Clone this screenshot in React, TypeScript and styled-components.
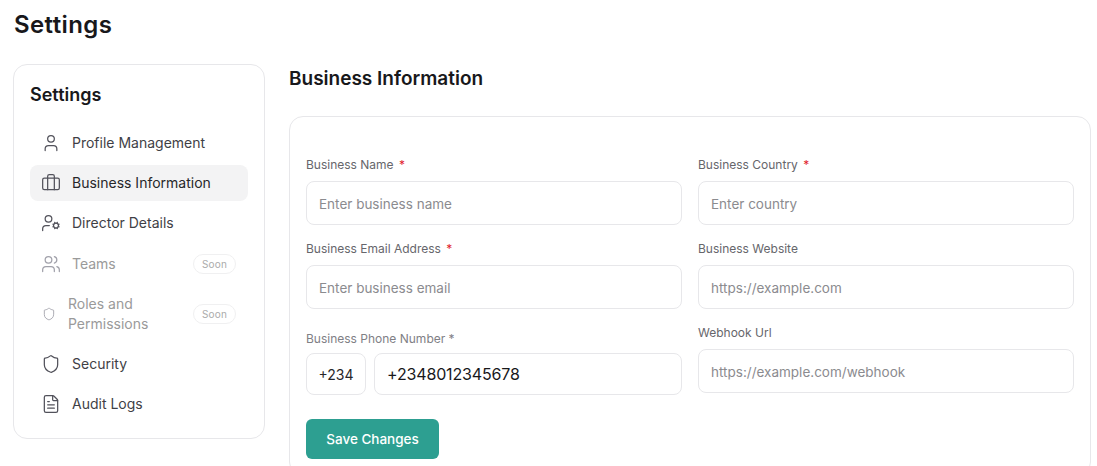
import styled, { createGlobalStyle } from 'styled-components'
import { Briefcase, FileText, Shield, User, UserCog, Users } from 'lucide-react'

const GlobalStyle = createGlobalStyle`
  html, body {
    margin: 0;
    padding: 0;
    height: 466px;
    overflow: hidden;
    background: #fff;
  }
  body {
    font-family: Inter, "Liberation Sans", sans-serif;
    color: #18181b;
  }
  * {
    box-sizing: border-box;
  }
`

const navItems = [
  { label: 'Profile Management', icon: User },
  { label: 'Business Information', icon: Briefcase, active: true },
  { label: 'Director Details', icon: UserCog },
  { label: 'Teams', icon: Users, soon: true },
  { label: 'Roles and Permissions', icon: Shield, soon: true, compact: true },
  { label: 'Security', icon: Shield },
  { label: 'Audit Logs', icon: FileText },
]

export default function App() {
  return (
    <Page>
      <GlobalStyle />
      <PageTitle>Settings</PageTitle>
      <Columns>
        <Sidebar>
          <SidebarTitle>Settings</SidebarTitle>
          <NavList>
            {navItems.map(({ label, icon: Icon, active, soon, compact }) => (
              <NavItem key={label} $active={active} $soon={soon} $compact={compact}>
                <Icon size={compact ? 14 : 20} strokeWidth={1.5} />
                <NavLabel>{label}</NavLabel>
                {soon && <SoonBadge>Soon</SoonBadge>}
              </NavItem>
            ))}
          </NavList>
        </Sidebar>
        <Main>
          <MainTitle>Business Information</MainTitle>
          <Card>
            <FormColumn>
              <Field>
                <Label>
                  Business Name <Required>*</Required>
                </Label>
                <Input placeholder="Enter business name" />
              </Field>
              <Field>
                <Label>
                  Business Email Address <Required>*</Required>
                </Label>
                <Input placeholder="Enter business email" />
              </Field>
              <PhoneField>
                <PhoneLabel>Business Phone Number *</PhoneLabel>
                <PhoneRow>
                  <DialCode>+234</DialCode>
                  <PhoneInput defaultValue="+2348012345678" />
                </PhoneRow>
              </PhoneField>
              <SaveButton>Save Changes</SaveButton>
            </FormColumn>
            <FormColumn>
              <Field>
                <Label>
                  Business Country <Required>*</Required>
                </Label>
                <Input placeholder="Enter country" />
              </Field>
              <Field>
                <Label>Business Website</Label>
                <Input placeholder="https://example.com" />
              </Field>
              <Field>
                <Label>Webhook Url</Label>
                <Input placeholder="https://example.com/webhook" />
              </Field>
            </FormColumn>
          </Card>
        </Main>
      </Columns>
    </Page>
  )
}

const Page = styled.div`
  padding: 10px 6px 0 13px;
`

const PageTitle = styled.h1`
  margin: 0 0 24px 1px;
  font-size: 24px;
  line-height: 30px;
  font-weight: 600;
  letter-spacing: 0.4px;
  color: #18181b;
`

const Columns = styled.div`
  display: flex;
  align-items: flex-start;
  gap: 24px;
`

const Sidebar = styled.aside`
  flex: 0 0 252px;
  padding: 16px;
  border: 1px solid #e7e7ea;
  border-radius: 14px;
`

const SidebarTitle = styled.h2`
  margin: 3px 0 19px;
  font-size: 18px;
  line-height: 22px;
  font-weight: 600;
`

const NavList = styled.nav`
  display: flex;
  flex-direction: column;
  gap: 4px;
`

const NavItem = styled.div<{ $active?: boolean; $soon?: boolean; $compact?: boolean }>`
  display: flex;
  align-items: center;
  gap: ${(p) => (p.$compact ? '12px' : '11px')};
  min-height: ${(p) => (p.$soon ? '37px' : '36px')};
  padding: ${(p) => (p.$soon ? '8px 12px' : '0 12px')};
  padding-left: ${(p) => (p.$compact ? '12px' : '11px')};
  border-radius: 8px;
  font-size: 14px;
  line-height: 20px;
  color: ${(p) => (p.$soon ? '#9a9a9a' : p.$active ? '#27272a' : '#3f3f46')};
  background: ${(p) => (p.$active ? '#f3f3f4' : 'transparent')};

  svg {
    flex-shrink: 0;
    color: ${(p) => (p.$soon ? '#a1a1aa' : '#52525b')};
  }
`

const NavLabel = styled.span`
  flex: 1;
  padding-right: 16px;
`

const SoonBadge = styled.span`
  flex-shrink: 0;
  width: 43px;
  height: 20px;
  border: 1px solid #f0f0f1;
  border-radius: 10px;
  font-size: 10px;
  line-height: 18px;
  text-align: center;
  letter-spacing: 0.2px;
  color: #ababab;
`

const Main = styled.main`
  flex: 1;
  min-width: 0;
`

const MainTitle = styled.h2`
  margin: 0 0 22px;
  font-size: 19px;
  line-height: 30px;
  font-weight: 600;
`

const Card = styled.section`
  display: grid;
  grid-template-columns: 1fr 1fr;
  gap: 16px;
  padding: 40px 16px 16px;
  border: 1px solid #e7e7ea;
  border-radius: 14px;
`

const FormColumn = styled.div`
  display: flex;
  flex-direction: column;
  align-items: stretch;
  gap: 16px;
`

const Field = styled.div`
  display: flex;
  flex-direction: column;
  gap: 8px;
`

const Label = styled.label`
  font-size: 12px;
  line-height: 16px;
  font-weight: 400;
  color: #66666b;
`

const Required = styled.span`
  color: #e11d2e;
  margin-left: 2px;
`

const Input = styled.input`
  height: 44px;
  width: 100%;
  padding: 1px 12px 0;
  border: 1px solid #e7e7ea;
  border-radius: 8px;
  font-family: inherit;
  font-size: 13.5px;
  color: #18181b;
  outline: none;

  &::placeholder {
    color: #8b8b8f;
    opacity: 1;
  }
`

const PhoneField = styled.div`
  display: flex;
  flex-direction: column;
  gap: 6px;
  margin-top: 6px;
`

const PhoneLabel = styled(Label)`
  color: #808085;
`

const PhoneRow = styled.div`
  display: flex;
  gap: 8px;
`

const DialCode = styled.div`
  display: flex;
  align-items: center;
  justify-content: center;
  flex: 0 0 60px;
  height: 42px;
  border: 1px solid #e7e7ea;
  border-radius: 8px;
  font-size: 14px;
  color: #27272a;
`

const PhoneInput = styled(Input)`
  flex: 1;
  height: 42px;
  padding-top: 0;
  font-size: 16px;
  letter-spacing: -0.15px;
`

const SaveButton = styled.button`
  align-self: flex-start;
  width: 133px;
  height: 40px;
  margin-top: 8px;
  border: none;
  border-radius: 6px;
  background: #2d9f91;
  color: #fff;
  font-family: inherit;
  font-size: 13.5px;
  font-weight: 500;
`
